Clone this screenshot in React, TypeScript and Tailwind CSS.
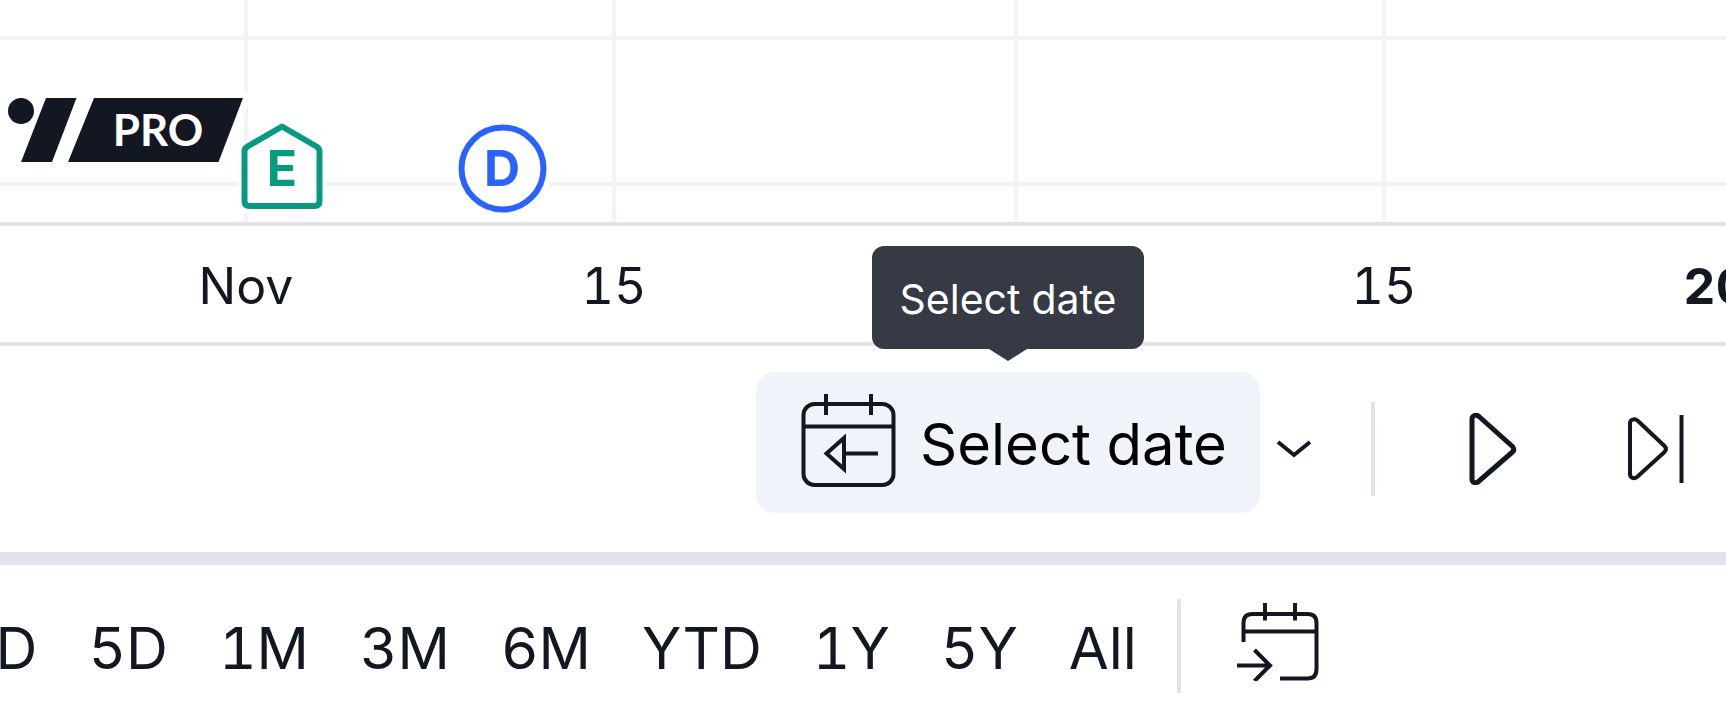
import type { ReactNode } from "react"

const ticks = [
    { label: "Nov", strong: false },
    { label: "15", strong: false },
    { label: "", strong: false },
    { label: "15", strong: false },
    { label: "2025", strong: true },
]

const ranges = ["1D", "5D", "1M", "3M", "6M", "YTD", "1Y", "5Y", "All"]

export default function App() {
    return <div className="w-full overflow-hidden bg-white text-[#131722] tabular-nums font-['Inter','Liberation_Sans',sans-serif]">
        <Chart/>
        <TimeAxis/>
        <ReplayToolbar/>
        <RangeBar/>
    </div>
}

const Chart = () => {
    return <div className="relative h-[226px] overflow-hidden border-b-4 border-[#e0e3eb]">
        <div className="grid h-full grid-cols-[248px_368px_402px_368px_364px]">
            {ticks.map((_, i) => <div key={i} className="border-r-4 border-[#f2f3f3]">
                <div className="h-10 border-b-4 border-[#f2f3f3]"></div>
                <div className="h-[146px] border-b-4 border-[#f2f3f3]"></div>
            </div>)}
        </div>
        <ProLogo/>
        <button aria-label="Earnings" className="absolute left-[238px] top-[118px]">
            <svg width="88" height="96" viewBox="238 118 88 96" fill="none" strokeLinejoin="round">
                <path d="M282 126.500L316.500 146.500Q319.500 148.500 319.500 151.500V201Q319.500 206 314.500 206H249.500Q244.500 206 244.500 201V151.500Q244.500 148.500 247.500 146.500Z" fill="#fff" stroke="#fff" strokeWidth="14"/>
                <path d="M282 126.500L316.500 146.500Q319.500 148.500 319.500 151.500V201Q319.500 206 314.500 206H249.500Q244.500 206 244.500 201V151.500Q244.500 148.500 247.500 146.500Z" fill="#fff" stroke="#089981" strokeWidth="6"/>
                <text x="282" y="186" textAnchor="middle" className="fill-[#089981] text-[50px] font-bold">E</text>
            </svg>
        </button>
        <button aria-label="Dividends" className="absolute left-[453px] top-[119px]">
            <svg width="99" height="99" viewBox="453 119 99 99" fill="none">
                <circle cx="502.500" cy="168.500" r="49" fill="#fff"/>
                <circle cx="502.500" cy="168.500" r="41" stroke="#2962ff" strokeWidth="6"/>
                <text x="502" y="186" textAnchor="middle" className="fill-[#2962ff] text-[50px] font-bold">D</text>
            </svg>
        </button>
    </div>
}

const ProLogo = () => {
    return <svg className="absolute left-0 top-[88px]" width="256" height="84" viewBox="0 88 256 84">
        <path d="M94 98H243L218.500 162H68Z" fill="#fff" stroke="#fff" strokeWidth="14"/>
        <circle cx="21" cy="111" r="13" fill="#131722"/>
        <path d="M46 98H76.500L52 162H21Z" fill="#131722"/>
        <path d="M94 98H243L218.500 162H68Z" fill="#131722"/>
        <text x="158" y="146" textAnchor="middle" className="fill-white text-[44px] font-bold font-['Lato',sans-serif]">PRO</text>
    </svg>
}

const TimeAxis = () => {
    return <div className="grid h-[120px] grid-cols-[248px_368px_402px_368px_364px] overflow-hidden border-b-4 border-[#e0e3eb] pt-1">
        {ticks.map((tick, i) => <div key={i} className="flex items-center justify-end">
            <div className="flex w-1 justify-center whitespace-nowrap">
                <span className={tick.strong ? "text-[50px] leading-[60px] font-bold" : "text-[50px] leading-[60px]"}>{tick.label}</span>
            </div>
        </div>)}
    </div>
}

const ReplayToolbar = () => {
    return <div className="flex h-[219px] items-center justify-end border-b-[13px] border-[#e0e3eb] pr-[42px]">
        <div className="relative -mt-3.5">
            <button className="flex h-[141px] w-[504px] items-center gap-6 rounded-[19px] bg-[#f0f3fa] pl-11 text-[58px] leading-[72px] whitespace-nowrap text-black">
                <CalendarBackIcon/>
                <span className="pt-1">Select date</span>
            </button>
            <Tooltip>Select date</Tooltip>
        </div>
        <button aria-label="More options" className="flex w-[68px] justify-center">
            <svg width="36" height="20" viewBox="0 0 36 20" fill="none" stroke="#131722" strokeWidth="4">
                <path d="M2 3L18 16L34 3"/>
            </svg>
        </button>
        <Divider className="ml-[43px]"/>
        <button aria-label="Play" className="ml-[94px]">
            <svg width="48" height="72" viewBox="0 0 48 72" fill="none" stroke="#131722" strokeWidth="5" strokeLinejoin="round">
                <path d="M3 6V66C3 69.500 6.500 71 9.500 68.500L43.500 39Q46 36.500 43.500 33.500L10 3.500C7 1 3 2.500 3 6Z"/>
            </svg>
        </button>
        <button aria-label="Forward" className="ml-[111px]">
            <svg width="56" height="70" viewBox="0 0 56 70" fill="none" stroke="#131722" strokeWidth="4" strokeLinejoin="round">
                <path d="M2 9V60C2 64 6 65.500 9 63L36.500 38Q39.500 35 36.500 32L10 7C6.500 4 2 5.500 2 9Z"/>
                <path d="M53.500 1V69"/>
            </svg>
        </button>
    </div>
}

const Tooltip = ({ children }: { children: ReactNode }) => {
    return <div role="tooltip" className="absolute bottom-full left-1/2 mb-[11px] flex -translate-x-1/2 flex-col items-center">
        <div className="flex h-[103px] w-[272px] items-center justify-center rounded-xl bg-[#363a45] pt-1 text-[41px] leading-[48px] whitespace-nowrap text-white">{children}</div>
        <svg width="38" height="12" viewBox="0 0 38 12" fill="#363a45"><path d="M0 0H38L19 12Z"/></svg>
    </div>
}

const RangeBar = () => {
    return <div className="flex h-[159px] items-center pt-0.5">
        <div className="-ml-[42px] flex gap-[51px] pt-1">
            {ranges.map((range) => <button key={range} className="text-[58px] leading-[72px] whitespace-nowrap">{range}</button>)}
        </div>
        <Divider className="ml-10"/>
        <button aria-label="Go to date" className="ml-14 pb-2">
            <svg width="82" height="78" viewBox="0 0 82 78" fill="none" stroke="#131722" strokeWidth="4">
                <path d="M6.500 39V20Q6.500 11 15.500 11H70.500Q79.500 11 79.500 20V66Q79.500 75.500 70.500 75.500H43"/>
                <path d="M6.500 28.500H79.500M28 0V17.500M58 0V17.500M0 62.500H33M17.500 47L33 62.500L17.500 78"/>
            </svg>
        </button>
    </div>
}

const CalendarBackIcon = () => {
    return <svg width="96" height="96" viewBox="0 1 96 96" fill="none" stroke="#131722" strokeWidth="4" className="shrink-0">
        <rect x="3.500" y="11" width="90" height="81" rx="11"/>
        <path d="M3.500 33.500H93.500M26 0V22M71 0V22M44 60.500H78"/>
        <path d="M26.500 60.500L44 45V76Z"/>
    </svg>
}

const Divider = ({ className }: { className: string }) => {
    return <div className={`h-[94px] w-1 shrink-0 bg-[#e0e3eb] ${className}`}></div>
}
